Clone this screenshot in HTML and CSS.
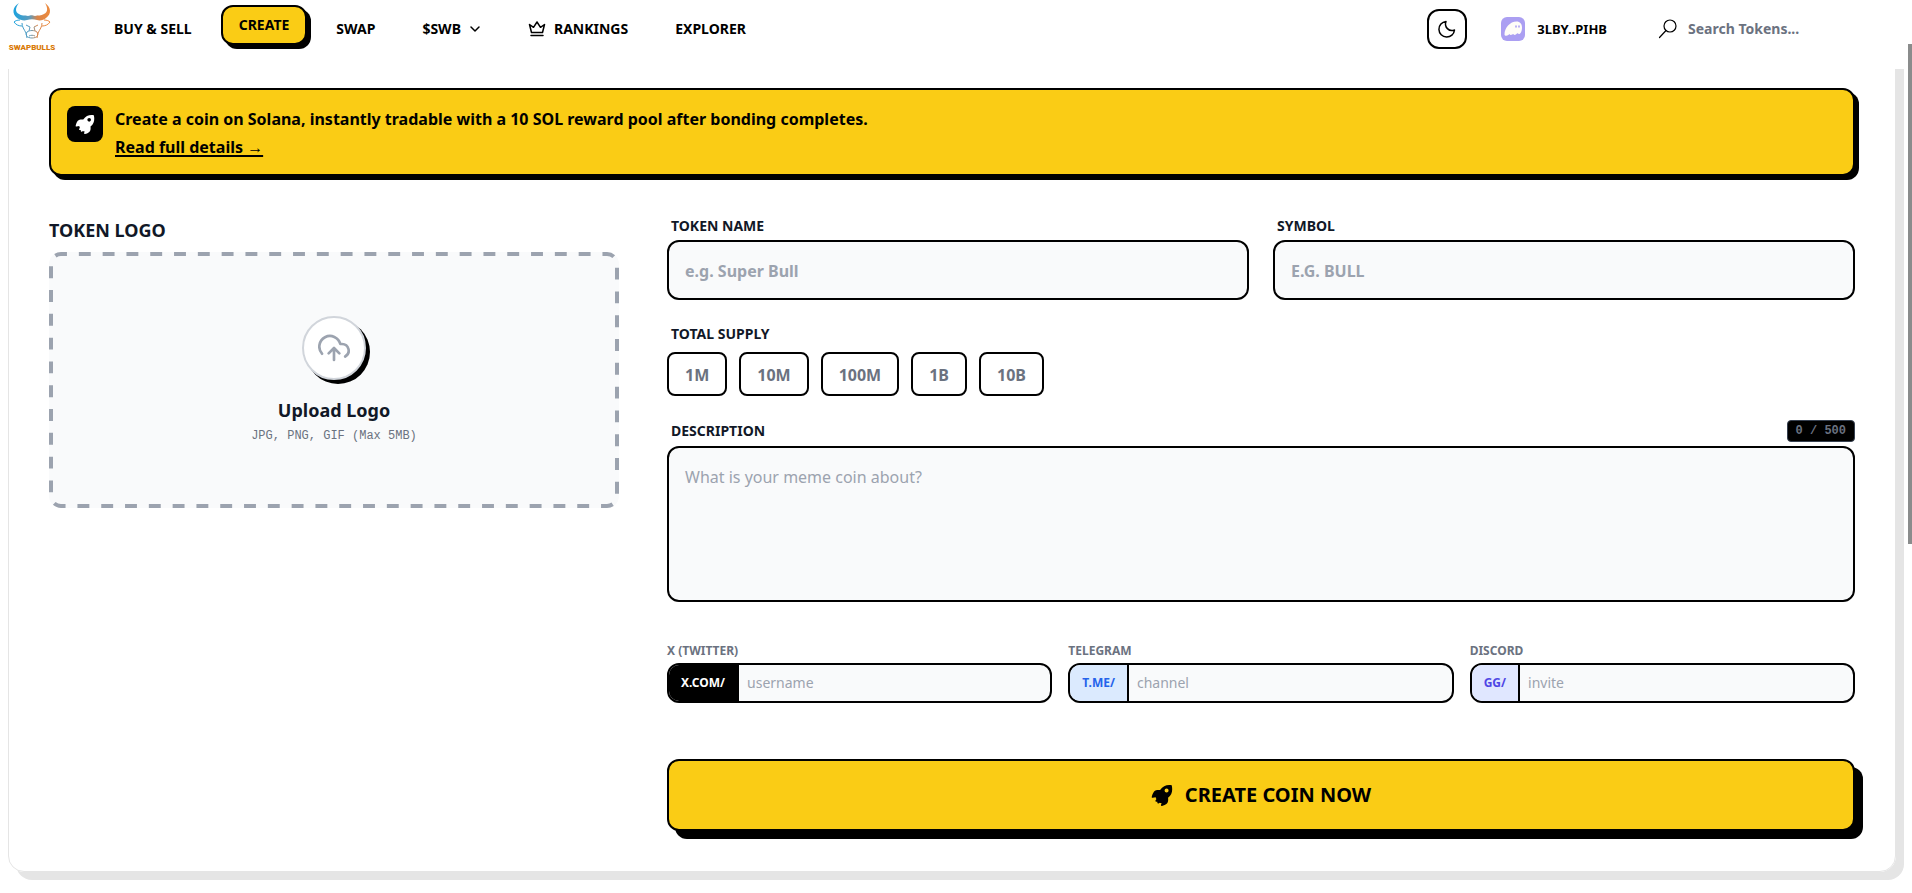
FILE: index.html
```html
<!DOCTYPE html>
<html lang="en">
<head>
    <meta charset="UTF-8">
    <meta name="viewport" content="width=device-width, initial-scale=1.0">
    <title>SwapBulls - Create</title>
    <link rel="stylesheet" href="styles.css">
</head>
<body>
    <!-- shared icons -->
    <svg class="sprite" aria-hidden="true">
        <symbol id="rocket" viewBox="0 0 24 24">
            <path fill-rule="evenodd" d="M22.6 1.4C17.4.5 13.200 2 9.900 6.600 7.300 6.300 4.800 6.600 3.400 8.200 2.200 9.700 1.200 12.200.800 14.200c-.1.600.4 1 1 .9l3.400-.6c-.1.800.2 1.400.7 1.900l-1 1.600c-.3.600.1 1.300.8 1.300h1.200v1.200c0 .700.7 1.100 1.300.8l1.400-.8c.6.400 1.200.4 1.900.3l-.6 2.200c-.1.600.4 1.100 1 .9 2-.5 4.300-1.400 5.500-2.700 1.400-1.500 1.500-3.700 1.200-6.200 4.500-3.400 5.200-8.400 4-13.600zM17 9.200a2.200 2.200 0 1 1 0-4.400 2.200 2.200 0 0 1 0 4.400z"/>
        </symbol>
    </svg>

    <header class="header">
        <a href="#" class="logo" aria-label="SwapBulls">
            <svg viewBox="0 0 48 50" width="48" height="50">
                <defs>
                    <linearGradient id="bull" x1="0" x2="1" y1="0" y2="0">
                        <stop offset="0" stop-color="#1ba3e0"/>
                        <stop offset=".45" stop-color="#5f9bbb"/>
                        <stop offset=".65" stop-color="#d9854a"/>
                        <stop offset="1" stop-color="#ee8a3c"/>
                    </linearGradient>
                </defs>
                <path fill="url(#bull)" d="M11 0C4 4 4 11 9 15c3 2 7 3 10 2 3-1 7-1 10 0 3 1 7 0 9-2 6-4 5-11-1-15 3 5 3 9-1 11-3 2-6 1-9 2-3-1-4-1-7 0-3-1-7 0-9-2-4-2-4-6 0-11z"/>
                <path fill="none" stroke="url(#bull)" stroke-width="1" d="M12 17c-3 0-5 1-6 2 2 3 5 4 8 4M36 17c3 0 5 1 6 2-2 3-5 4-8 4M14 20c0 4 2 6 4 10l1 5M34 20c0 4-2 6-4 10l-1 5M18 22l4 2-1 4M30 22l-4 2 1 4M19 29c-2 3 0 6 5 6s7-3 5-6c-3-2-7-2-10 0zM21 33c2-1 4-1 6 0"/>
                <text class="logo-text" x="24" y="47" text-anchor="middle">SWAPBULLS</text>
            </svg>
        </a>
        <nav class="nav">
            <a href="#" class="nav-link">BUY &amp; SELL</a>
            <a href="#" class="nav-link active">CREATE</a>
            <a href="#" class="nav-link">SWAP</a>
            <a href="#" class="nav-link">$SWB
                <svg class="chevron" viewBox="0 0 12 12" width="12" height="12"><path d="M2 4l4 4 4-4"/></svg>
            </a>
            <a href="#" class="nav-link">
                <svg class="crown" viewBox="0 0 18 18" width="18" height="18"><path d="M3.500 12.500L1.500 4.500l4 2.800L9 2l3.500 5.300 4-2.800-2 8zM3 15.500h12"/></svg>
                RANKINGS
            </a>
            <a href="#" class="nav-link">EXPLORER</a>
        </nav>
        <div class="tools">
            <button type="button" class="theme" aria-label="Dark mode">
                <svg viewBox="0 0 20 20" width="20" height="20"><path d="M9 2.500A6.500 6.500 0 0 0 17.500 11 7.800 7.800 0 1 1 9 2.500z"/></svg>
            </button>
            <button type="button" class="wallet">
                <svg viewBox="0 0 24 24" width="24" height="24">
                    <rect width="24" height="24" rx="6" fill="#ab9ff2"/>
                    <path fill="#fffdf8" d="M3.500 17.500C3.500 11 9 4.500 15.500 4.500c3.500 0 5.500 2.500 5.500 6 0 4-1.500 6.500-3 6.500-1 0-1.200-.7-1.600-.7-.6 0-1 1.600-2.600 1.600-1 0-1.200-.9-1.700-.9s-1.100 1-2.400 1c-.8 0-1.100-.6-1.400-.9-.8 1-1.900 1.600-3 1.600-1 0-1.800-.3-1.800-1.200z"/>
                    <ellipse cx="15" cy="9.500" rx=".8" ry="1.300" fill="#ab9ff2"/>
                    <ellipse cx="18" cy="9.500" rx=".8" ry="1.300" fill="#ab9ff2"/>
                </svg>
                3LBY..PIHB
            </button>
            <label class="search">
                <svg viewBox="0 0 20 20" width="20" height="20"><circle cx="12" cy="7" r="6"/><path d="M8 11.500L1.500 18.500"/></svg>
                <input type="text" placeholder="Search Tokens..." aria-label="Search tokens">
            </label>
        </div>
    </header>

    <main class="card">
        <section class="notice">
            <span class="notice-icon"><svg width="20" height="20"><use href="#rocket"/></svg></span>
            <div class="notice-text">
                <p>Create a coin on Solana, instantly tradable with a 10 SOL reward pool after bonding completes.</p>
                <a href="#">Read full details →</a>
            </div>
        </section>

        <form class="form">
            <div class="logo-col">
                <h2>TOKEN LOGO</h2>
                <button type="button" class="upload">
                    <svg class="upload-border" width="100%" height="100%" aria-hidden="true"><rect x="2" y="2" rx="10" pathLength="1632"/></svg>
                    <span class="upload-icon">
                        <svg viewBox="0 0 24 24" width="32" height="32"><path d="M16 16l-4-4-4 4M12 12v9M20.390 18.390A5 5 0 0 0 18 9h-1.260A8 8 0 1 0 3 16.300"/></svg>
                    </span>
                    <span class="upload-title">Upload Logo</span>
                    <span class="upload-hint">JPG, PNG, GIF (Max 5MB)</span>
                </button>
            </div>

            <div class="fields">
                <div class="row two">
                    <div class="field">
                        <label for="name">TOKEN NAME</label>
                        <input class="box" id="name" type="text" placeholder="e.g. Super Bull">
                    </div>
                    <div class="field">
                        <label for="symbol">SYMBOL</label>
                        <input class="box" id="symbol" type="text" placeholder="E.G. BULL">
                    </div>
                </div>

                <fieldset class="supply">
                    <legend>TOTAL SUPPLY</legend>
                    <div class="supply-list">
                        <button type="button">1M</button>
                        <button type="button">10M</button>
                        <button type="button">100M</button>
                        <button type="button">1B</button>
                        <button type="button">10B</button>
                    </div>
                </fieldset>

                <div class="field">
                    <div class="label-row">
                        <label for="desc">DESCRIPTION</label>
                        <span class="counter">0 / 500</span>
                    </div>
                    <textarea class="box" id="desc" placeholder="What is your meme coin about?"></textarea>
                </div>

                <div class="row three">
                    <div class="social">
                        <label for="x">X (TWITTER)</label>
                        <div class="social-box"><span class="prefix x">X.COM/</span><input id="x" type="text" placeholder="username"></div>
                    </div>
                    <div class="social">
                        <label for="telegram">TELEGRAM</label>
                        <div class="social-box"><span class="prefix telegram">T.ME/</span><input id="telegram" type="text" placeholder="channel"></div>
                    </div>
                    <div class="social">
                        <label for="discord">DISCORD</label>
                        <div class="social-box"><span class="prefix discord">GG/</span><input id="discord" type="text" placeholder="invite"></div>
                    </div>
                </div>

                <button type="submit" class="submit">
                    <svg width="22" height="22"><use href="#rocket"/></svg>
                    CREATE COIN NOW
                </button>
            </div>
        </form>
    </main>
    <div class="scroll-thumb"></div>
</body>
</html>
```
FILE: styles.css
```css
* {
    box-sizing: border-box;
}

body {
    margin: 0;
    background: #fff;
    color: #000;
    font-family: "Noto Sans", sans-serif;
    font-size: 16px;
    line-height: 24px;
}

h2,
p {
    margin: 0;
}

a {
    color: inherit;
    text-decoration: none;
}

button,
input,
textarea {
    font: inherit;
    color: inherit;
}

button {
    cursor: pointer;
}

svg {
    display: block;
    flex: none;
}

.sprite {
    position: absolute;
    width: 0;
    height: 0;
}

/* header */
.header {
    position: sticky;
    top: 0;
    z-index: 2;
    display: flex;
    align-items: flex-start;
    height: 69px;
    padding: 0 96px 0 8px;
    background: #fff;
    font-size: 14px;
    font-weight: 700;
}

.logo {
    padding-top: 3px;
}

.logo-text {
    font-family: Roboto, sans-serif;
    font-size: 8px;
    font-weight: 900;
    fill: #d97a08;
}

.nav {
    display: flex;
    gap: 11px;
    margin: 9px auto 0 40px;
}

.nav-link {
    display: flex;
    align-items: center;
    gap: 8px;
    height: 40px;
    padding: 0 16px;
    border: 2px solid transparent;
    border-radius: 12px;
}

.nav-link.active {
    margin-top: -4px;
    background: #facc15;
    border-color: #000;
    box-shadow: 4px 4px 0 #000;
}

.chevron,
.crown,
.theme svg,
.search svg {
    fill: none;
    stroke: currentColor;
    stroke-linecap: round;
    stroke-linejoin: round;
    stroke-width: 1.5;
}

.tools {
    display: flex;
    align-items: center;
    margin-top: 9px;
}

.theme {
    display: grid;
    place-items: center;
    width: 40px;
    height: 40px;
    padding: 0;
    background: #fff;
    border: 2px solid #000;
    border-radius: 12px;
}

.wallet {
    display: flex;
    align-items: center;
    gap: 12px;
    margin: 0 51px 0 34px;
    padding: 0;
    background: none;
    border: 0;
    font-size: 13px;
}

.search {
    display: flex;
    align-items: center;
    gap: 10px;
}

.search svg {
    stroke-width: 1.2;
}

.search input {
    width: 128px;
    padding: 0;
    background: none;
    border: 0;
}

.search input::placeholder {
    color: #6b7280;
}

/* main card, its top edge is tucked under the header */
.card {
    margin: -24px 16px 21px 8px;
    padding: 42px 40px 40px;
    border: 1px solid #e5e5e5;
    border-radius: 16px;
    box-shadow: 8px 8px 0 #e5e5e5;
}

.notice {
    display: flex;
    gap: 12px;
    padding: 16px;
    margin-bottom: 40px;
    background: #facc15;
    border: 2px solid #000;
    border-radius: 12px;
    box-shadow: 4px 4px 0 #000;
    font-weight: 700;
}

.notice-icon {
    display: grid;
    place-items: center;
    width: 36px;
    height: 36px;
    background: #000;
    border-radius: 8px;
}

.notice-icon svg {
    fill: #fff;
}

.notice-text {
    display: flex;
    flex-direction: column;
    align-items: flex-start;
    gap: 4px;
}

.notice-text p {
    line-height: 26px;
}

.notice-text a {
    line-height: 22px;
    text-decoration: underline 2px;
    text-underline-offset: 2px;
    text-decoration-skip-ink: none;
}

/* form */
.form {
    display: grid;
    grid-template-columns: repeat(12, 1fr);
    gap: 48px;
}

.logo-col {
    grid-column: span 4;
}

.logo-col h2 {
    margin-bottom: 8px;
    font-size: 18px;
    line-height: 28px;
    color: #111827;
}

.upload {
    position: relative;
    display: flex;
    flex-direction: column;
    align-items: center;
    justify-content: center;
    width: 100%;
    height: 256px;
    padding: 0;
    background: #f9fafb;
    border: 0;
    border-radius: 12px;
}

/* wider dashes than a css dashed border gives */
.upload-border {
    position: absolute;
    inset: 0;
}

.upload-border rect {
    width: calc(100% - 4px);
    height: calc(100% - 4px);
    fill: none;
    stroke: #9ca3af;
    stroke-width: 4;
    stroke-dasharray: 12 12;
    stroke-dashoffset: 6;
}

.upload-icon {
    display: grid;
    place-items: center;
    width: 64px;
    height: 64px;
    margin-bottom: 16px;
    background: #fff;
    border: 2px solid #d1d5db;
    border-radius: 50%;
    box-shadow: 4px 4px 0 #000;
}

.upload-icon svg {
    fill: none;
    stroke: #9ca3af;
    stroke-linecap: round;
    stroke-linejoin: round;
    stroke-width: 2;
}

.upload-title {
    font-size: 18px;
    font-weight: 700;
    line-height: 28px;
    color: #111827;
}

.upload-hint {
    margin-top: 4px;
    font-family: "Liberation Mono", monospace;
    font-size: 12px;
    line-height: 16px;
    color: #6b7280;
}

.fields {
    grid-column: span 8;
    display: flex;
    flex-direction: column;
    gap: 24px;
}

.row {
    display: grid;
}

.two {
    grid-template-columns: repeat(2, 1fr);
    gap: 24px;
}

.three {
    grid-template-columns: repeat(3, 1fr);
    gap: 16px;
    margin-top: 17px;
}

.field {
    display: flex;
    flex-direction: column;
    gap: 4px;
}

.field label,
.supply legend {
    padding: 0 4px;
    font-size: 14px;
    font-weight: 700;
    line-height: 20px;
    color: #111827;
}

.box {
    width: 100%;
    padding: 17px 16px 15px;
    background: #f9fafb;
    border: 2px solid #000;
    border-radius: 12px;
}

input.box {
    height: 60px;
    font-weight: 700;
}

textarea.box {
    display: block;
    height: 156px;
    resize: none;
}

::placeholder {
    color: #9ca3af;
    opacity: 1;
}

.supply {
    margin: 0;
    padding: 0;
    border: 0;
}

.supply-list {
    display: flex;
    gap: 12px;
    margin-top: 8px;
}

.supply button {
    height: 44px;
    padding: 2px 16px 0;
    background: #fff;
    border: 2px solid #000;
    border-radius: 8px;
    font-weight: 700;
    color: #6b7280;
}

.label-row {
    display: flex;
    align-items: center;
    justify-content: space-between;
}

.counter {
    padding: 2px 8px;
    background: #000;
    border: 1px solid #374151;
    border-radius: 4px;
    font-family: "Liberation Mono", monospace;
    font-size: 12px;
    font-weight: 700;
    line-height: 16px;
    color: #6b7280;
}

.social label {
    display: block;
    margin-bottom: 4px;
    font-size: 12px;
    font-weight: 700;
    line-height: 16px;
    color: #6b7280;
}

.social-box {
    display: flex;
    height: 40px;
    overflow: hidden;
    background: #f9fafb;
    border: 2px solid #000;
    border-radius: 12px;
}

.social-box input {
    flex: 1;
    min-width: 0;
    padding: 0 8px;
    background: none;
    border: 0;
    font-size: 14px;
}

.prefix {
    display: flex;
    align-items: center;
    padding: 0 12px;
    border-right: 2px solid #000;
    font-size: 12px;
    font-weight: 700;
}

.prefix.x {
    background: #000;
    color: #fff;
}

.prefix.telegram {
    background: #dbeafe;
    color: #2563eb;
}

.prefix.discord {
    background: #e0e7ff;
    color: #4f46e5;
}

.submit {
    display: flex;
    align-items: center;
    justify-content: center;
    gap: 12px;
    height: 72px;
    margin-top: 32px;
    background: #facc15;
    border: 2px solid #000;
    border-radius: 12px;
    box-shadow: 8px 8px 0 #000;
    font-size: 20px;
    font-weight: 700;
}

/* scroll indicator lies over the page edge */
.scroll-thumb {
    position: fixed;
    top: 44px;
    right: 0;
    z-index: 3;
    width: 4px;
    height: 56vh;
    background: #8a8c8c;
}
```
